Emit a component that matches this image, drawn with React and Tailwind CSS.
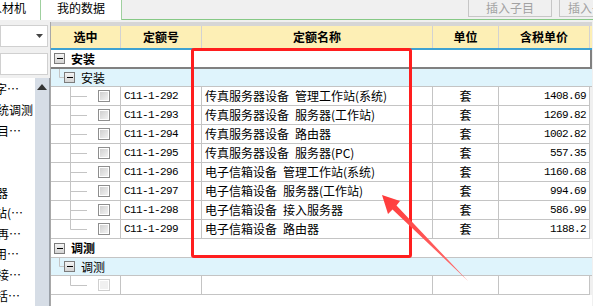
import React from 'react';

const rows = [
  ['C11-1-292', '传真服务器设备', '管理工作站(系统)', '1408.69'],
  ['C11-1-293', '传真服务器设备', '服务器(工作站)', '1269.82'],
  ['C11-1-294', '传真服务器设备', '路由器', '1002.82'],
  ['C11-1-295', '传真服务器设备', '服务器(PC)', '557.35'],
  ['C11-1-296', '电子信箱设备', '管理工作站(系统)', '1160.68'],
  ['C11-1-297', '电子信箱设备', '服务器(工作站)', '994.69'],
  ['C11-1-298', '电子信箱设备', '接入服务器', '586.99'],
  ['C11-1-299', '电子信箱设备', '路由器', '1188.2'],
];

// left list, scrolled sideways so only the tails show
const sideItems = [
  ['字…', '-ml-[5px]'],
  ['统调测', '-ml-[3px]'],
  ['目…', '-ml-[3px]'],
  ['', ''],
  ['', ''],
  ['器', '-ml-[4px]'],
  ['站(…', '-ml-[5px]'],
  ['再…', '-ml-[3px]'],
  ['用…', '-ml-[5px]'],
  ['接…', '-ml-[3px]'],
  ['括…', '-ml-[4px]'],
];

const cols = 'grid grid-cols-[70px_81px_231px_66px_91px]';
const mono = "font-['Liberation_Mono',monospace] text-[11px] tracking-[-0.6px]";

const MinusBox = () => (
  <div className="w-[11px] h-[11px] border border-[#7c7c7c] bg-gradient-to-b from-[#f4f4f4] to-[#d4d4d4] flex items-center justify-center shrink-0">
    <div className="w-[6px] h-[1px] bg-black" />
  </div>
);

const Check = ({ disabled }) => (
  <div className={`w-[12px] h-[12px] border p-[1px] shrink-0 ${disabled ? 'border-[#cfcfcf]' : 'border-[#8e8e8e]'}`}>
    <div className={`w-full h-full ${disabled ? 'bg-[#f0f0f0]' : 'bg-gradient-to-br from-[#d0d0d0] to-[#f2f2f2]'}`} />
  </div>
);

const TreeLines = ({ last }) => (
  <svg width="36" height="18" className="shrink-0">
    <line x1="19.5" y1="0" x2="19.5" y2={last ? 9.5 : 18} stroke="#c4c4c4" />
    <line x1="19.5" y1="9.5" x2="36" y2="9.5" stroke="#c4c4c4" />
  </svg>
);

const PickCell = ({ last, disabled }) => (
  <div className="flex items-center border-r border-b border-[#c4c4c4] bg-white">
    <TreeLines last={last} />
    <div className="ml-[11px]">
      <Check disabled={disabled} />
    </div>
  </div>
);

const GroupRow = ({ title, focus }) => (
  <div className={`h-[19px] flex items-center bg-white pl-[3px] ${focus ? 'border-r-2 border-b-2 border-[#808080]' : 'border-b border-[#c4c4c4]'}`}>
    <MinusBox />
    <span className="ml-[6px] font-bold">{title}</span>
  </div>
);

const SubRow = ({ title }) => (
  <div className="h-[18px] flex items-center bg-[#dff4fc] border-b border-[#c4c4c4]">
    <svg width="13" height="17" className="shrink-0">
      <line x1="8.5" y1="0" x2="8.5" y2="8.5" stroke="#c4c4c4" />
      <line x1="8.5" y1="8.5" x2="13" y2="8.5" stroke="#c4c4c4" />
    </svg>
    <MinusBox />
    <span className="ml-[6px]">{title}</span>
  </div>
);

const App = () => {
  return (
    <div className="relative w-[614px] h-[306px] overflow-hidden bg-white text-[12px] text-black font-['Noto_Sans_CJK_SC',sans-serif]">
      <div className="w-[593px] h-full bg-[#f0f0f0] flex flex-col">
        {/* tabs and toolbar */}
        <div className="h-[20px] flex shrink-0">
          <div className="w-[41px] bg-white border-r border-[#9fd09f] overflow-hidden flex items-center h-full">
            <span className="-ml-[10px] whitespace-nowrap pb-[4px]">人材机</span>
          </div>
          <div className="w-[81px] bg-white border-r border-[#9fd09f] flex items-center justify-center pb-[4px]">
            我的数据
          </div>
          <div className="flex-1 border-b border-[#86c986] flex gap-[7px] pl-[346px] overflow-hidden">
            <div className="w-[84px] h-[19px] -mt-[2px] shrink-0 border border-[#c6c6c6] flex items-center justify-center text-[#a2a2a2]">
              插入子目
            </div>
            <div className="w-[60px] h-[19px] -mt-[2px] shrink-0 border border-[#c6c6c6] flex items-center pl-[8px] text-[#a2a2a2] whitespace-nowrap">
              插入子目
            </div>
          </div>
        </div>

        <div className="flex flex-1 min-h-0 pt-[2px]">
          {/* left panel */}
          <div className="w-[51px] shrink-0 border-r border-[#a8a8a8] flex flex-col">
            <div className="mt-[3px] mr-[2px] h-[22px] bg-white border border-[#d0d0d0] flex items-center justify-end pr-[4px]">
              <svg width="7" height="4">
                <polygon points="0,0 7,0 3.5,4" fill="#444" />
              </svg>
            </div>
            <div className="mt-[6px] mr-[2px] h-[22px] bg-white border border-[#d0d0d0]" />
            <div className="mt-[3px] flex-1 flex min-h-0">
              <div className="w-[35px] bg-white overflow-hidden flex flex-col pt-[1px]">
                {sideItems.map(([t, ml], i) => (
                  <div key={i} className="h-[21px] flex items-center whitespace-nowrap">
                    <span className={ml}>{t}</span>
                  </div>
                ))}
              </div>
              <div className="flex-1 bg-[#d6dde6] border-r border-[#9aa0a8] flex justify-center pt-[6px]">
                <svg width="10" height="6">
                  <polygon points="5,0 10,6 0,6" fill="#333" />
                </svg>
              </div>
            </div>
          </div>

          {/* quota table */}
          <div className="w-[541px] flex flex-col">
            <div className="h-[4px] bg-[#d6d6d6]" />
            <div className={`${cols} h-[24px] bg-[#fdefb5] font-bold border-b-2 border-[#3ea2d2]`}>
              {['选中', '定额号', '定额名称', '单位', '含税单价'].map((h) => (
                <div key={h} className="flex items-center justify-center border-r border-[#d2d2d2]">
                  {h}
                </div>
              ))}
            </div>

            <GroupRow title="安装" focus />
            <SubRow title="安装" />
            {rows.map(([code, a, b, price], i) => (
              <div key={code} className={`${cols} h-[19px]`}>
                <PickCell last={i === rows.length - 1} />
                <div className={`flex items-center pl-[3px] border-r border-b border-[#c4c4c4] bg-white ${mono}`}>{code}</div>
                <div className="flex items-center pl-[3px] border-r border-b border-[#c4c4c4] bg-white whitespace-nowrap">
                  <span>{a}</span>
                  <span className="ml-[6px]">{b}</span>
                </div>
                <div className="flex items-center justify-center border-r border-b border-[#c4c4c4] bg-white">套</div>
                <div className={`flex items-center justify-end pr-[3px] border-r border-b border-[#c4c4c4] bg-white ${mono}`}>{price}</div>
              </div>
            ))}

            <GroupRow title="调测" />
            <SubRow title="调测" />
            <div className={`${cols} h-[19px]`}>
              <PickCell last disabled />
              <div className="border-r border-b border-[#c4c4c4] bg-white" />
              <div className="border-r border-b border-[#c4c4c4] bg-white" />
              <div className="border-r border-b border-[#c4c4c4] bg-white" />
              <div className="border-r border-b border-[#c4c4c4] bg-white" />
            </div>
            <div className="flex-1 bg-white" />
          </div>
        </div>
      </div>

      {/* annotation: red frame and arrow */}
      <div className="absolute left-[191px] top-[48px] w-[221px] h-[210px] border-[3px] border-[#ff1e1e] rounded-[3px]" />
      <svg className="absolute left-0 top-0" width="614" height="306">
        <defs>
          <linearGradient id="arw" x1="0" y1="0" x2="1" y2="1">
            <stop offset="0" stopColor="#ff3a3a" />
            <stop offset="1" stopColor="#ff7070" />
          </linearGradient>
        </defs>
        <polygon
          points="382,195 400,201 396.5,205.5 468,281 392.5,209.5 388,214"
          fill="url(#arw)"
        />
      </svg>
    </div>
  );
};

export default App;
